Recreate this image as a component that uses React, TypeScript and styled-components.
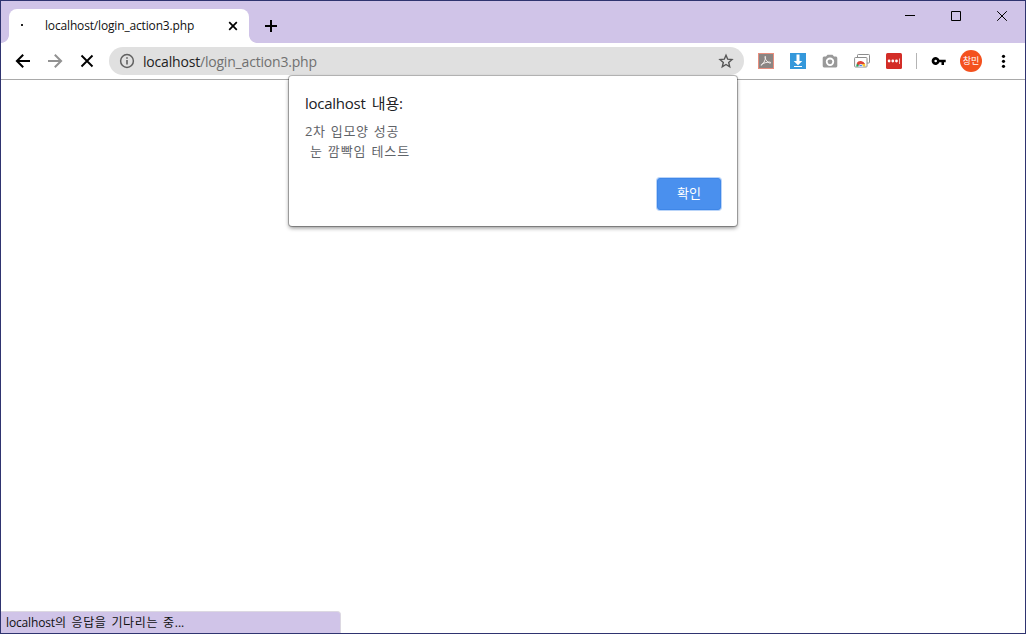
import React from "react";
import styled, { createGlobalStyle } from "styled-components";

const Global = createGlobalStyle`
  *{box-sizing:border-box}
  body{margin:0;background:#fff;overflow:hidden}
`;

const Frame = styled.div`
  width: 1026px;
  height: 634px;
  border: 1px solid #2f3470;
  background: #fff;
  display: flex;
  flex-direction: column;
  position: relative;
  font-family: "Open Sans", "Noto Sans CJK KR", sans-serif;
  color: #000;
`;

const TitleBar = styled.header`
  height: 42px;
  flex: none;
  background: #d0c4e8;
  display: flex;
  align-items: flex-start;
`;

const TabFoot = styled.div<{ $side: "left" | "right" }>`
  width: 8px;
  height: 8px;
  align-self: flex-end;
  background: radial-gradient(
    circle at ${(p) => (p.$side === "left" ? "0 0" : "100% 0")},
    transparent 7.5px,
    #fff 8.2px
  );
`;

const Tab = styled.div`
  width: 240px;
  height: 34px;
  margin-top: 8px;
  border-radius: 8px 8px 0 0;
  background: #fff;
  display: flex;
  align-items: center;
  padding: 0 11px 0 12px;
`;

const TabTitle = styled.div`
  line-height: 18px;
  margin-bottom: 2px;
`;

const Spinner = styled.i`
  width: 2px;
  height: 2px;
  background: #222;
  margin-right: 22px;
  margin-bottom: 2px;
`;

const Text = styled.span<{
  $size: number;
  $track?: number;
  $word?: number;
  $color?: string;
}>`
  font-size: ${(p) => p.$size}px;
  letter-spacing: ${(p) => p.$track ?? 0}px;
  word-spacing: ${(p) => p.$word ?? 0}px;
  color: ${(p) => p.$color ?? "#111"};
  white-space: pre;
`;

const Spacer = styled.div`
  flex: 1;
`;

const Icon = styled.svg`
  display: block;
  flex: none;
  fill: none;
  stroke: #000;
`;

const NewTab = styled.div`
  padding: 19px 0 0 8px;
`;

const Control = styled.div`
  width: 46px;
  height: 29px;
  display: flex;
  align-items: center;
  justify-content: center;
`;

const Toolbar = styled.nav`
  height: 37px;
  flex: none;
  border-bottom: 1px solid #a9a9a9;
  display: flex;
  align-items: center;
  padding: 0 13px 0 14px;
`;

const NavButtons = styled.div`
  display: flex;
  gap: 16px;
  width: 94px;
`;

const AddressBar = styled.div`
  width: 635px;
  flex: none;
  height: 28px;
  border-radius: 14px;
  background: #e0e0e0;
  display: flex;
  align-items: center;
  padding: 0 10px;
`;

const Url = styled.div`
  margin-left: 8px;
  line-height: 20px;
`;

const Extensions = styled.div`
  display: flex;
  align-items: center;
  gap: 16px;
  margin-left: 14px;
`;

const Divider = styled.div`
  width: 1px;
  height: 16px;
  background: #b4b4b4;
  margin: 0 14px 0 14px;
`;

const Avatar = styled.div`
  width: 22px;
  height: 22px;
  border-radius: 50%;
  background: #f4511e;
  display: flex;
  align-items: center;
  justify-content: center;
  margin: 0 14px 0 13px;
  line-height: 22px;
`;

const Dialog = styled.section`
  position: absolute;
  left: 288px;
  top: 75px;
  width: 448px;
  height: 150px;
  background: #fff;
  border-radius: 3px;
  box-shadow: 0 0 0 1px rgba(0, 0, 0, 0.26), 0 2px 4px rgba(0, 0, 0, 0.45);
  padding: 16px;
  display: flex;
  flex-direction: column;
`;

const DialogTitle = styled.div`
  height: 23px;
  line-height: 23px;
`;

const Message = styled.div`
  margin-top: 6px;
  display: flex;
  flex-direction: column;
  line-height: 20px;
  height: 40px;
`;

const OkButton = styled.button`
  align-self: flex-end;
  margin-top: 17px;
  width: 64px;
  height: 32px;
  border: 1px solid #3f87e8;
  border-radius: 3px;
  background: #4a90ee;
  box-shadow: 0 0 0 1px #b9d4f9;
  padding: 0 0 2px;
  font-family: inherit;
  line-height: 28px;
  flex: none;
`;

const Status = styled.footer`
  width: 340px;
  height: 22px;
  background: #d0c4e8;
  border-top: 1px solid #dcd8e2;
  border-right: 1px solid #dcd8e2;
  border-radius: 0 4px 0 0;
  padding-left: 5px;
  line-height: 19px;
`;

const PdfIcon = () => (
  <Icon width="16" height="16" viewBox="0 0 16 16">
    <rect x=".5" y=".5" width="15" height="15" fill="#8b8583" stroke="#e88d7d" />
    <path d="M3.300 12.200C5.200 11 7.400 7.500 7.600 4.200 7.600 2.800 6.700 3.100 7 4.500c.5 2.500 2.500 4.700 4.600 5.500 1.500.5 1.500-.8.200-.9-2.600-.1-5.500.7-7.900 2-1.200.8-1.100 1.500-.6 1.100Z" stroke="#f5efed" strokeWidth="1" />
  </Icon>
);

const DownloadIcon = () => (
  <Icon width="16" height="16" viewBox="0 0 16 16">
    <rect width="16" height="16" fill="#3498db" stroke="none" />
    <path d="M6.500 1.500h3v6.500h2.800L8 12.300 3.700 8h2.800ZM4 13h8v1H4Z" fill="#fff" stroke="none" />
  </Icon>
);

const CameraIcon = () => (
  <Icon width="16" height="16" viewBox="0 0 16 16">
    <path d="M5.500 1.800h5L12 3.500h2Q15.300 3.500 15.300 5v8q0 1.400-1.300 1.400H2Q.7 14.400.7 13V5Q.7 3.500 2 3.500h2Z" fill="#999" stroke="none" />
    <circle cx="8" cy="8.800" r="3.300" fill="#999" stroke="#fff" strokeWidth="1.800" />
  </Icon>
);

const GalleryIcon = () => (
  <Icon width="16" height="16" viewBox="0 0 16 16">
    <rect x="3.500" y="1.500" width="12" height="8.500" rx=".8" fill="#fff" stroke="#8c8c8c" />
    <rect x=".6" y="4.500" width="12.400" height="9.500" rx=".8" fill="#fff" stroke="#8c8c8c" />
    <path d="M2.300 13.500v-1a4.500 4.500 0 0 1 1-2.600l3.500 3.600Z" fill="#24a15b" stroke="none" />
    <path d="M6.800 10.500h4.100q.5 1 .4 3H6.800Z" fill="#f7c52e" stroke="none" />
    <path d="M2.600 10.200a4.700 4.700 0 0 1 8.400.8H6.800L4.900 12.400Z" fill="#dc4437" stroke="none" />
    <path d="M4.700 13.500a2.100 2.100 0 0 1 4.200 0Z" fill="#4285f4" stroke="#fff" strokeWidth=".6" />
  </Icon>
);

const DotsIcon = () => (
  <Icon width="16" height="16" viewBox="0 0 16 16">
    <rect width="16" height="16" rx="1.500" fill="#d32d27" stroke="none" />
    <path d="M1.700 8a1.400 1.400 0 1 1 2.800 0 1.400 1.400 0 1 1-2.800 0m3.700 0a1.400 1.400 0 1 1 2.800 0 1.400 1.400 0 1 1-2.800 0m3.700 0a1.400 1.400 0 1 1 2.800 0 1.400 1.400 0 1 1-2.800 0" fill="#fff" stroke="none" />
    <path d="M13.500 5.500v5.500" stroke="#fff" strokeWidth=".7" />
  </Icon>
);

export default function App() {
  return (
    <>
      <Global />
      <Frame>
        <TitleBar>
          <TabFoot $side="left" />
          <Tab>
            <Spinner />
            <TabTitle>
              <Text $size={12} $track={-0.16}>localhost/login_action3.php</Text>
            </TabTitle>
            <Spacer />
            <Icon width="10" height="10" viewBox="0 0 10 10">
              <path d="M1.200 1.200l7.600 7.600M8.800 1.200L1.200 8.800" strokeWidth="1.700" />
            </Icon>
          </Tab>
          <TabFoot $side="right" />
          <NewTab>
            <Icon width="12" height="12" viewBox="0 0 12 12">
              <path d="M6 0v12M0 6h12" strokeWidth="2" />
            </Icon>
          </NewTab>
          <Spacer />
          <Control>
            <Icon width="10" height="11" viewBox="0 0 10 11"><path d="M0 5.500h10" /></Icon>
          </Control>
          <Control>
            <Icon width="10" height="10" viewBox="0 0 10 10"><path d="M.5.5h9v9h-9Z" /></Icon>
          </Control>
          <Control>
            <Icon width="10" height="10" viewBox="0 0 10 10"><path d="M.2.2l9.600 9.600M9.800.2L.2 9.800" /></Icon>
          </Control>
        </TitleBar>

        <Toolbar>
          <NavButtons>
            <Icon width="16" height="16" viewBox="0 0 16 16">
              <path d="M15 8H2M8.200 1.700L1.900 8l6.300 6.300" strokeWidth="2" />
            </Icon>
            <Icon width="16" height="16" viewBox="0 0 16 16">
              <path d="M1 8h13M7.800 1.700L14.100 8l-6.300 6.300" strokeWidth="2" stroke="#929292" />
            </Icon>
            <Icon width="16" height="16" viewBox="0 0 16 16">
              <path d="M2.500 2.500l11 11M13.500 2.500l-11 11" strokeWidth="1.900" />
            </Icon>
          </NavButtons>
          <AddressBar>
            <Icon width="16" height="16" viewBox="0 0 16 16">
              <circle cx="8" cy="8" r="6.400" stroke="#606060" strokeWidth="1.500" />
              <path d="M8 7v4.500M8 4.300v1.500" stroke="#606060" strokeWidth="1.600" />
            </Icon>
            <Url>
              <Text $size={14} $track={-0.19} $color="#222">localhost</Text>
              <Text $size={14} $track={-0.19} $color="#707070">/login_action3.php</Text>
            </Url>
            <Spacer />
            <Icon width="16" height="16" viewBox="0 0 16 16">
              <path d="M8 2.200l1.700 4 4.300.4-3.300 2.900 1 4.300L8 11.500l-3.700 2.300 1-4.300L2 6.600l4.300-.4Z" stroke="#555" strokeWidth="1.400" />
            </Icon>
          </AddressBar>
          <Extensions>
            <PdfIcon />
            <DownloadIcon />
            <CameraIcon />
            <GalleryIcon />
            <DotsIcon />
          </Extensions>
          <Divider />
          <Icon width="16" height="16" viewBox="0 0 16 16">
            <path d="M8.400 6.700A4 4 0 1 0 8.400 9.300H10.500V12H13V9.300h1.700V6.700ZM4.700 6.700a1.300 1.300 0 1 1 0 2.600 1.300 1.300 0 0 1 0-2.600" fill="#000" fillRule="evenodd" stroke="none" />
          </Icon>
          <Avatar><Text $size={9} $color="#fff">창민</Text></Avatar>
          <Icon width="16" height="16" viewBox="0 0 16 16">
            <circle cx="7.500" cy="3.300" r="1.600" fill="#000" stroke="none" />
            <circle cx="7.500" cy="8.300" r="1.600" fill="#000" stroke="none" />
            <circle cx="7.500" cy="13.300" r="1.600" fill="#000" stroke="none" />
          </Icon>
        </Toolbar>

        <Spacer />
        <Status>
          <Text $size={12} $track={-0.15}>localhost</Text>
          <Text $size={12} $track={0.65} $word={1.1}>의 응답을 기다리는 중</Text>
          <Text $size={12}>...</Text>
        </Status>

        <Dialog>
          <DialogTitle>
            <Text $size={15} $track={-0.25} $word={2.6} $color="#202124">localhost 내용:</Text>
          </DialogTitle>
          <Message>
            <Text $size={13} $track={0.65} $word={1.1} $color="#5f6368">2차 입모양 성공</Text>
            <Text $size={13} $track={0.95} $word={0.6} $color="#5f6368"> 눈 깜빡임 테스트</Text>
          </Message>
          <OkButton><Text $size={13} $color="#fff">확인</Text></OkButton>
        </Dialog>
      </Frame>
    </>
  );
}
